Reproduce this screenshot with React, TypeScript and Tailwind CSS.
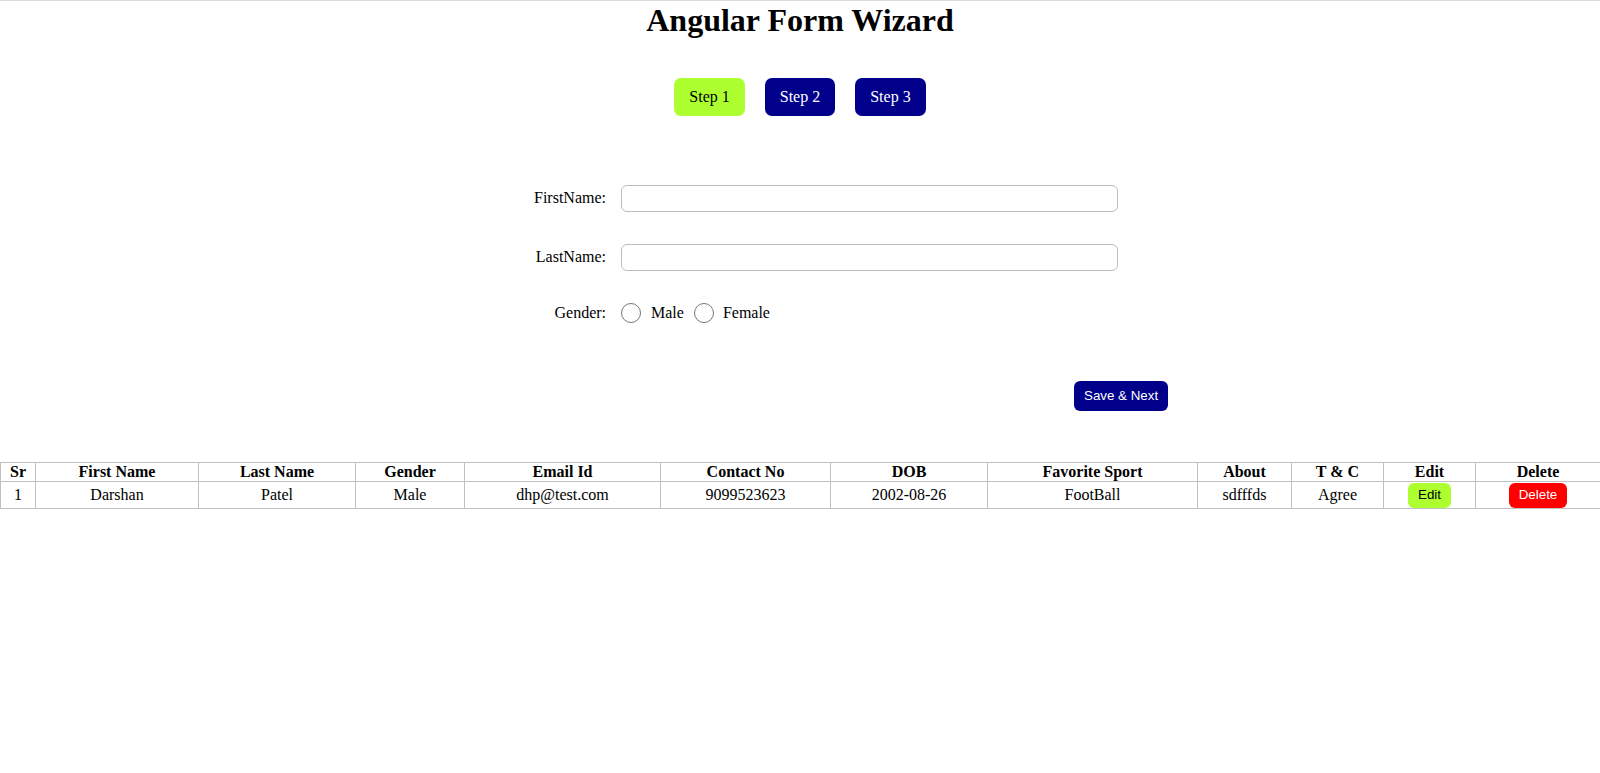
const columns = [
  { label: "Sr", width: 35 },
  { label: "First Name", width: 163 },
  { label: "Last Name", width: 157 },
  { label: "Gender", width: 109 },
  { label: "Email Id", width: 196 },
  { label: "Contact No", width: 170 },
  { label: "DOB", width: 157 },
  { label: "Favorite Sport", width: 210 },
  { label: "About", width: 94 },
  { label: "T & C", width: 92 },
  { label: "Edit", width: 92 },
  { label: "Delete", width: 125 },
];

const rows = [
  {
    sr: 1,
    firstName: "Darshan",
    lastName: "Patel",
    gender: "Male",
    email: "dhp@test.com",
    contact: "9099523623",
    dob: "2002-08-26",
    sport: "FootBall",
    about: "sdfffds",
    tc: "Agree",
  },
];

const serif = { fontFamily: '"Liberation Serif", "Times New Roman", serif' };
const sans = { fontFamily: '"Liberation Sans", Arial, sans-serif' };

export default function App() {
  return (
    <div className="min-h-[773px] bg-white text-black" style={serif}>
      <div className="h-px bg-[#dadce0]" />

      <h1 className="mt-px text-center text-[32px] font-bold leading-[37px]">
        Angular Form Wizard
      </h1>

      {/* Steps */}
      <div className="mt-[39px] flex justify-center gap-5">
        <button className="rounded-[7px] bg-[#adff2f] px-[15px] py-[10px] text-[16px] leading-[18px] text-black">
          Step 1
        </button>
        <button className="rounded-[7px] bg-[#00008b] px-[15px] py-[10px] text-[16px] leading-[18px] text-white">
          Step 2
        </button>
        <button className="rounded-[7px] bg-[#00008b] px-[15px] py-[10px] text-[16px] leading-[18px] text-white">
          Step 3
        </button>
      </div>

      {/* Form */}
      <div className="mt-[69px] flex flex-col">
        <div className="flex items-center">
          <label className="w-[606px] text-right text-[16px] leading-[18px] -translate-y-px">FirstName:</label>
          <input
            type="text"
            className="ml-[15px] h-[27px] w-[497px] rounded-[6px] border border-[#bdbdbd] px-2 outline-none"
          />
        </div>
        <div className="mt-[32px] flex items-center">
          <label className="w-[606px] text-right text-[16px] leading-[18px] -translate-y-px">LastName:</label>
          <input
            type="text"
            className="ml-[15px] h-[27px] w-[497px] rounded-[6px] border border-[#bdbdbd] px-2 outline-none"
          />
        </div>
        <div className="mt-[32px] flex items-center text-[16px] leading-[18px]">
          <span className="w-[606px] text-right">Gender:</span>
          <span className="ml-[15px] h-5 w-5 rounded-full border border-[#767676] bg-white" />
          <span className="ml-[10px]">Male</span>
          <span className="ml-[10px] h-5 w-5 rounded-full border border-[#767676] bg-white" />
          <span className="ml-[9px]">Female</span>
        </div>
        <div className="mt-[58px] flex">
          <button
            className="ml-[1074px] h-[30px] rounded-[6px] bg-[#00008b] px-[10px] text-[13.33px] text-white"
            style={sans}
          >
            Save &amp; Next
          </button>
        </div>
      </div>

      {/* Table */}
      <table className="mt-[51px] w-full table-fixed border-collapse text-[16px]">
        <colgroup>
          {columns.map((c) => (
            <col key={c.label} style={{ width: c.width }} />
          ))}
        </colgroup>
        <thead>
          <tr>
            {columns.map((c) => (
              <th
                key={c.label}
                className="border border-[#c0c0c0] p-0 text-center font-bold leading-[18px]"
              >
                {c.label}
              </th>
            ))}
          </tr>
        </thead>
        <tbody>
          {rows.map((r) => (
            <tr key={r.sr} className="h-[26px]">
              <td className="border border-[#c0c0c0] p-0 text-center">{r.sr}</td>
              <td className="border border-[#c0c0c0] p-0 text-center">{r.firstName}</td>
              <td className="border border-[#c0c0c0] p-0 text-center">{r.lastName}</td>
              <td className="border border-[#c0c0c0] p-0 text-center">{r.gender}</td>
              <td className="border border-[#c0c0c0] p-0 text-center">{r.email}</td>
              <td className="border border-[#c0c0c0] p-0 text-center">{r.contact}</td>
              <td className="border border-[#c0c0c0] p-0 text-center">{r.dob}</td>
              <td className="border border-[#c0c0c0] p-0 text-center">{r.sport}</td>
              <td className="border border-[#c0c0c0] p-0 text-center">{r.about}</td>
              <td className="border border-[#c0c0c0] p-0 text-center">{r.tc}</td>
              <td className="border border-[#c0c0c0] p-0 text-center">
                <button
                  className="h-[25px] rounded-[6px] bg-[#adff2f] px-[10px] align-middle text-[13.33px] text-black"
                  style={sans}
                >
                  Edit
                </button>
              </td>
              <td className="border border-[#c0c0c0] p-0 text-center">
                <button
                  className="h-[25px] rounded-[6px] bg-[#ff0000] px-[10px] align-middle text-[13.33px] text-white"
                  style={sans}
                >
                  Delete
                </button>
              </td>
            </tr>
          ))}
        </tbody>
      </table>
    </div>
  );
}
